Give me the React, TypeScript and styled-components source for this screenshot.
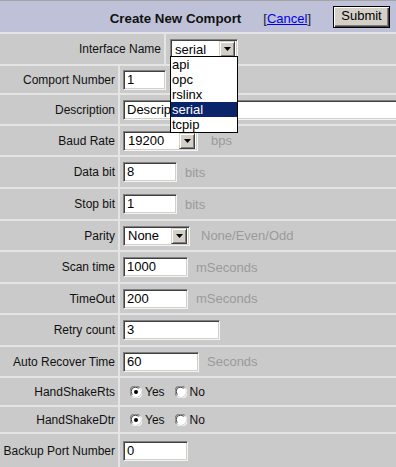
import React from 'react'
import styled, { createGlobalStyle } from 'styled-components'

const GlobalStyle = createGlobalStyle`
  body {
    margin: 0;
    background: #e6e6e6;
  }
`

const Page = styled.div`
  width: 396px;
  height: 467px;
  overflow: hidden;
  background: #e4e4e4;
  font-family: "Liberation Sans", Arial, sans-serif;
  color: #111;
  display: flex;
  flex-direction: column;
  gap: 2px;
`

const Header = styled.div`
  height: 31px;
  flex: none;
  border-top: 1px solid #a4a4a4;
  background: #bec1d7;
  display: flex;
  align-items: center;
  justify-content: flex-end;
  padding-right: 6px;
`

const Title = styled.div`
  font-weight: bold;
  font-size: 13.3px;
  color: #111;
  margin-top: 3px;
`

const CancelWrap = styled.div`
  font-size: 13px;
  color: #222;
  margin-left: 22px;
  margin-top: 3px;
`

const CancelLink = styled.a`
  color: #0000ee;
  text-decoration: underline;
  cursor: pointer;
`

const SubmitButton = styled.button`
  margin-left: 22px;
  height: 22px;
  width: 57px;
  padding: 0 0 2px;
  background: #d4d0c8;
  border: 1px solid #000;
  box-shadow: inset 1px 1px #fff, inset -1px -1px #404040, inset -2px -2px #808080;
  font-family: "Liberation Sans", Arial, sans-serif;
  font-size: 13px;
  color: #000;
`

const Row = styled.div<{ $h: number; $split?: number }>`
  height: ${(p) => p.$h}px;
  flex: none;
  display: grid;
  grid-template-columns: ${(p) => p.$split ?? 118}px 1fr;
  column-gap: 2px;
`

const Label = styled.div`
  background: #cacaca;
  display: flex;
  align-items: center;
  justify-content: flex-end;
  padding-right: 3px;
  font-size: 12px;
  white-space: nowrap;
`

const Value = styled.div<{ $pad?: number }>`
  background: #cacaca;
  display: flex;
  align-items: center;
  padding-left: ${(p) => p.$pad ?? 3}px;
  position: relative;
  white-space: nowrap;
`

const TextBox = styled.div<{ $w: number }>`
  width: ${(p) => p.$w}px;
  height: 20px;
  flex: none;
  box-sizing: border-box;
  background: #fff;
  border: 1px solid;
  border-color: #808080 #f4f4f4 #f4f4f4 #808080;
  box-shadow: inset 1px 1px #404040, inset -1px -1px #d4d0c8;
  font-size: 13px;
  line-height: 18px;
  padding-left: 3px;
  color: #000;
  overflow: hidden;
`

const SelectBox = styled.div<{ $w: number }>`
  width: ${(p) => p.$w}px;
  height: 20px;
  flex: none;
  box-sizing: border-box;
  background: #fff;
  border: 1px solid;
  border-color: #808080 #f4f4f4 #f4f4f4 #808080;
  box-shadow: inset 1px 1px #404040, inset -1px -1px #d4d0c8;
  display: flex;
  align-items: center;
  justify-content: space-between;
  padding: 2px;
  font-size: 13px;
  color: #000;
`

const SelectText = styled.span`
  padding-left: 2px;
`

const ArrowButton = styled.div`
  width: 16px;
  height: 16px;
  box-sizing: border-box;
  background: #d4d0c8;
  border: 1px solid;
  border-color: #d4d0c8 #404040 #404040 #d4d0c8;
  box-shadow: inset 1px 1px #fff, inset -1px -1px #808080;
  display: flex;
  align-items: center;
  justify-content: center;
`

const Unit = styled.span<{ $gap?: number }>`
  color: #9a9a9a;
  font-size: 13px;
  margin-left: ${(p) => p.$gap ?? 8}px;
`

const DropList = styled.div`
  position: absolute;
  left: 4px;
  top: 22px;
  width: 68px;
  box-sizing: border-box;
  background: #fff;
  border: 1px solid #000;
  z-index: 5;
  font-size: 13px;
  color: #000;
`

const DropItem = styled.div<{ $active?: boolean }>`
  height: 15px;
  line-height: 15px;
  padding-left: 1px;
  background: ${(p) => (p.$active ? '#0a246a' : '#fff')};
  color: ${(p) => (p.$active ? '#fff' : '#000')};
`

const RadioGroup = styled.div`
  display: flex;
  align-items: center;
  font-size: 12px;
  padding-left: 7px;
`

const RadioLabel = styled.span`
  margin-left: 3px;
  margin-right: 10px;
`

function Arrow() {
  return (
    <ArrowButton>
      <svg width="7" height="4" viewBox="0 0 7 4">
        <path d="M0 0h7L3.5 4z" fill="#000" />
      </svg>
    </ArrowButton>
  )
}

function Radio({ checked }: { checked?: boolean }) {
  return (
    <svg width="12" height="12" viewBox="0 0 12 12">
      <circle cx="6" cy="6" r="5" fill="#fff" />
      <path d="M1.5 9.5A5 5 0 0 1 9.5 1.5" stroke="#808080" strokeWidth="1.2" fill="none" />
      <path d="M2.5 8.5A3.6 3.6 0 0 1 8.5 2.5" stroke="#404040" strokeWidth="1" fill="none" />
      <path d="M10.5 2.5A5 5 0 0 1 2.5 10.5" stroke="#f0f0f0" strokeWidth="1.2" fill="none" />
      {checked && <circle cx="6" cy="6" r="2" fill="#000" />}
    </svg>
  )
}

type Field = { label: string; value: string; w: number; unit?: string; h: number }

const bitFields: Field[] = [
  { label: 'Data bit', value: '8', w: 54, unit: 'bits', h: 30 },
  { label: 'Stop bit', value: '1', w: 54, unit: 'bits', h: 30 },
]

const timings: Field[] = [
  { label: 'Scan time', value: '1000', w: 65, unit: 'mSeconds', h: 30 },
  { label: 'TimeOut', value: '200', w: 65, unit: 'mSeconds', h: 29 },
  { label: 'Retry count', value: '3', w: 97, h: 30 },
  { label: 'Auto Recover Time', value: '60', w: 76, unit: 'Seconds', h: 29 },
]

const interfaces = ['api', 'opc', 'rslinx', 'serial', 'tcpip']

function FieldRow({ f }: { f: Field }) {
  return (
    <Row $h={f.h}>
      <Label>{f.label}</Label>
      <Value>
        <TextBox $w={f.w}>{f.value}</TextBox>
        {f.unit && <Unit>{f.unit}</Unit>}
      </Value>
    </Row>
  )
}

export default function App() {
  return (
    <Page>
      <GlobalStyle />
      <Header>
        <Title>Create New Comport</Title>
        <CancelWrap>
          [<CancelLink>Cancel</CancelLink>]
        </CancelWrap>
        <SubmitButton>Submit</SubmitButton>
      </Header>

      <Row $h={30} $split={164} style={{ position: 'relative', zIndex: 2 }}>
        <Label>Interface Name</Label>
        <Value $pad={4}>
          <SelectBox $w={68}>
            <SelectText>serial</SelectText>
            <Arrow />
          </SelectBox>
          <DropList>
            {interfaces.map((name) => (
              <DropItem key={name} $active={name === 'serial'}>
                {name}
              </DropItem>
            ))}
          </DropList>
        </Value>
      </Row>

      <Row $h={27}>
        <Label>Comport Number</Label>
        <Value>
          <TextBox $w={43}>1</TextBox>
        </Value>
      </Row>

      <Row $h={29}>
        <Label>Description</Label>
        <Value>
          <TextBox $w={300}>Descrip</TextBox>
        </Value>
      </Row>

      <Row $h={29}>
        <Label>Baud Rate</Label>
        <Value>
          <SelectBox $w={75}>
            <SelectText>19200</SelectText>
            <Arrow />
          </SelectBox>
          <Unit $gap={13}>bps</Unit>
        </Value>
      </Row>

      {bitFields.map((f) => (
        <FieldRow f={f} key={f.label} />
      ))}

      <Row $h={29}>
        <Label>Parity</Label>
        <Value>
          <SelectBox $w={67}>
            <SelectText>None</SelectText>
            <Arrow />
          </SelectBox>
          <Unit $gap={11}>None/Even/Odd</Unit>
        </Value>
      </Row>

      {timings.map((f) => (
        <FieldRow f={f} key={f.label} />
      ))}

      {['HandShakeRts', 'HandShakeDtr'].map((name, i) => (
        <Row $h={i === 0 ? 27 : 25} key={name}>
          <Label>{name}</Label>
          <Value>
            <RadioGroup>
              <Radio checked />
              <RadioLabel>Yes</RadioLabel>
              <Radio />
              <RadioLabel>No</RadioLabel>
            </RadioGroup>
          </Value>
        </Row>
      ))}

      <Row $h={34}>
        <Label>Backup Port Number</Label>
        <Value>
          <TextBox $w={65}>0</TextBox>
        </Value>
      </Row>
    </Page>
  )
}
